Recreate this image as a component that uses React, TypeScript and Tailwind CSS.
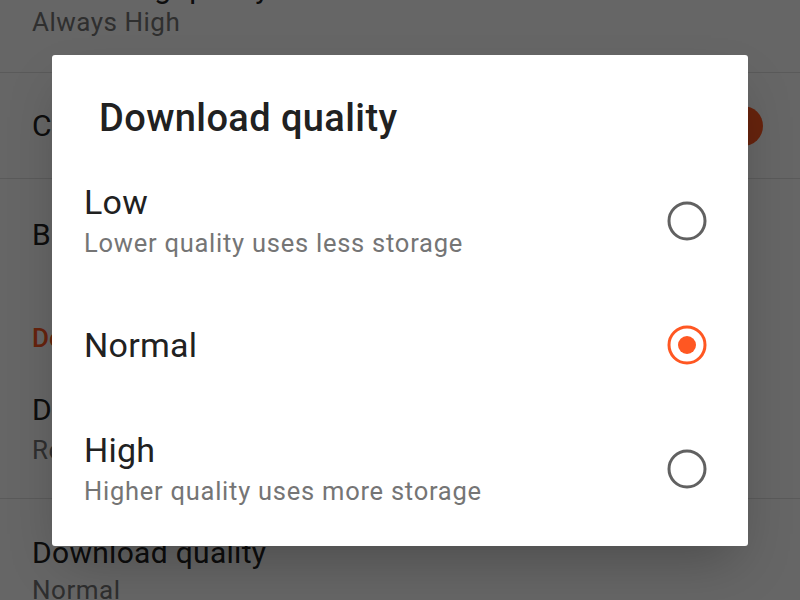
import { useState } from 'react'

type Quality = 'low' | 'normal' | 'high'

const options: { id: Quality; title: string; subtitle?: string }[] = [
  { id: 'low', title: 'Low', subtitle: 'Lower quality uses less storage' },
  { id: 'normal', title: 'Normal' },
  { id: 'high', title: 'High', subtitle: 'Higher quality uses more storage' },
]

function Radio({ checked }: { checked: boolean }) {
  return (
    <svg width="40" height="40" viewBox="0 0 40 40" className="shrink-0">
      <circle
        cx="20"
        cy="20"
        r="18"
        fill="none"
        strokeWidth="3"
        stroke={checked ? '#ff5722' : '#616161'}
      />
      {checked && <circle cx="20" cy="20" r="9" fill="#ff5722" />}
    </svg>
  )
}

function SettingsBehind() {
  return (
    <div className="flex flex-col bg-white text-[#212121]">
      {/* streaming row, mostly scrolled off */}
      <div className="h-[73px] flex flex-col justify-end pb-[34px] px-8 border-b border-[#e0e0e0]">
        <div className="text-[30px] leading-[36px] tracking-[0.3px]">Streaming quality</div>
        <div className="text-[26px] leading-[32px] tracking-[0.5px] text-[#757575]">Always High</div>
      </div>

      <div className="h-[106px] flex items-center justify-between pl-8 pr-[37px] border-b border-[#e0e0e0]">
        <div className="text-[30px] leading-[36px] tracking-[0.3px]">Cellular streaming</div>
        <div className="relative w-[68px] h-[40px] flex items-center">
          <div className="w-[60px] h-[24px] rounded-full bg-[#ffab91]" />
          <div className="absolute right-0 w-[40px] h-[40px] rounded-full bg-[#ff5722]" />
        </div>
      </div>

      <div className="h-[112px] flex items-center px-8">
        <div className="text-[30px] leading-[36px] tracking-[0.3px]">Background playback</div>
      </div>

      <div className="pt-[31px] pb-[18px] px-8 text-[26px] leading-[32px] font-medium text-[#ff5722]">
        Downloads
      </div>

      <div className="pt-[20px] pb-[32px] px-8 border-b border-[#e0e0e0]">
        <div className="text-[30px] leading-[36px] tracking-[0.3px]">Download over cellular</div>
        <div className="text-[26px] leading-[32px] tracking-[0.5px] text-[#757575] mt-[6px]">
          Requires Wi-Fi
        </div>
      </div>

      <div className="pt-[36px] px-8">
        <div className="text-[30px] leading-[36px] tracking-[0.3px]">Download quality</div>
        <div className="text-[26px] leading-[32px] tracking-[0.5px] text-[#757575] mt-[3px]">Normal</div>
      </div>
    </div>
  )
}

export default function App() {
  const [quality, setQuality] = useState<Quality>('normal')

  return (
    <div className="relative w-[800px] h-[600px] overflow-hidden bg-white font-['Roboto',sans-serif]">
      <SettingsBehind />

      <div className="absolute inset-0 bg-black/60 flex items-center justify-center">
        <div className="w-[696px] h-[491px] bg-white rounded-[3px] shadow-2xl flex flex-col">
          <h2 className="pt-[43px] pl-[47px] text-[38px] leading-[40px] font-medium tracking-[0.4px] text-[#212121]">
            Download quality
          </h2>

          <div className="mt-[21px] flex flex-col">
            {options.map((o) => (
              <div
                key={o.id}
                className="h-[124px] flex items-center justify-between pl-8 pr-[41px] cursor-pointer"
                onClick={() => setQuality(o.id)}
              >
                <div className="flex flex-col gap-[5px]">
                  <div className="text-[34px] leading-[40px] tracking-[0.25px] text-[#212121]">
                    {o.title}
                  </div>
                  {o.subtitle && (
                    <div className="text-[25.5px] leading-[32px] tracking-[0.75px] text-[#757575]">
                      {o.subtitle}
                    </div>
                  )}
                </div>
                <Radio checked={quality === o.id} />
              </div>
            ))}
          </div>
        </div>
      </div>
    </div>
  )
}
